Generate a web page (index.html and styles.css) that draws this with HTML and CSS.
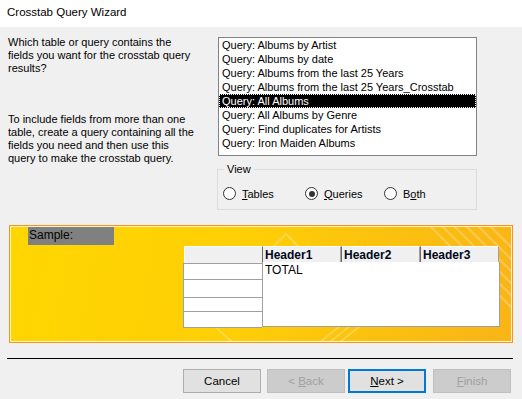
FILE: index.html
```html
<!DOCTYPE html>
<html lang="en">
<head>
    <meta charset="UTF-8">
    <title>Crosstab Query Wizard</title>
    <link rel="stylesheet" href="styles.css">
</head>
<body>
    <div class="titlebar">Crosstab Query Wizard</div>

    <div class="top">
        <div class="intro">
            <p class="para">Which table or query contains the<br>fields you want for the crosstab query<br>results?</p>
            <p class="para second">To include fields from more than one<br>table, create a query containing all the<br>fields you need and then use this<br>query to make the crosstab query.</p>
        </div>

        <div class="picker">
            <div class="listbox">
                <div class="item">Query: Albums by Artist</div>
                <div class="item">Query: Albums by date</div>
                <div class="item">Query: Albums from the last 25 Years</div>
                <div class="item">Query: Albums from the last 25 Years_Crosstab</div>
                <div class="item selected">Query: All Albums</div>
                <div class="item">Query: All Albums by Genre</div>
                <div class="item">Query: Find duplicates for Artists</div>
                <div class="item">Query: Iron Maiden Albums</div>
            </div>

            <div class="view">
                <span class="legend">View</span>
                <div class="options">
                    <label class="radio r-tables"><span class="dot"></span><span><u>T</u>ables</span></label>
                    <label class="radio r-queries"><span class="dot checked"></span><span><u>Q</u>ueries</span></label>
                    <label class="radio r-both"><span class="dot"></span><span>B<u>o</u>th</span></label>
                </div>
            </div>
        </div>
    </div>

    <div class="sample">
        <svg class="deco" width="502" height="116" viewBox="0 0 502 116">
            <g stroke="#ffffff" stroke-opacity="0.25" stroke-width="2" fill="none">
                <polyline points="258,26 276,8 294,26"/>
                <line x1="420" y1="0" x2="502" y2="82"/>
                <line x1="432" y1="0" x2="502" y2="70"/>
                <line x1="444" y1="0" x2="502" y2="58"/>
                <line x1="456" y1="0" x2="502" y2="46"/>
                <line x1="468" y1="0" x2="502" y2="34"/>
                <line x1="480" y1="0" x2="502" y2="22"/>
                <line x1="200" y1="96" x2="222" y2="116"/>
                <line x1="310" y1="116" x2="330" y2="100"/>
                <line x1="320" y1="116" x2="340" y2="100"/>
                <line x1="330" y1="116" x2="350" y2="100"/>
            </g>
        </svg>
        <div class="sample-label">Sample:</div>
        <div class="grid">
            <div class="row-heads">
                <div class="corner"></div>
                <div class="rh"></div>
                <div class="rh tall"></div>
                <div class="rh short"></div>
                <div class="rh"></div>
            </div>
            <div class="data">
                <div class="heads">
                    <div class="head">Header1</div>
                    <div class="head">Header2</div>
                    <div class="head">Header3</div>
                </div>
                <div class="body">TOTAL</div>
            </div>
        </div>
    </div>

    <div class="separator"></div>

    <div class="buttons">
        <button class="btn">Cancel</button>
        <button class="btn disabled">&lt; <u>B</u>ack</button>
        <button class="btn default"><u>N</u>ext &gt;</button>
        <button class="btn disabled"><u>F</u>inish</button>
    </div>
</body>
</html>
```

FILE: styles.css
```css
body {
    margin: 0;
    width: 522px;
    height: 399px;
    overflow: hidden;
    background: #f0f0f0;
    font-family: "Liberation Sans", Arial, sans-serif;
    font-size: 11px;
    color: #000;
}

.titlebar {
    height: 27px;
    line-height: 25px;
    padding-left: 7px;
    font-size: 11.5px;
    background: #fff;
}

.top {
    display: flex;
    height: 198px;
}

.intro {
    width: 210px;
    padding: 9px 0 0 8px;
    white-space: nowrap;
}

.para {
    margin: 0;
    line-height: 13px;
}

.para.second {
    margin-top: 38px;
}

.picker {
    width: 259px;
    padding-top: 10px;
}

.listbox {
    height: 112px;
    padding: 0 0 5px 0;
    background: #fff;
    border: 1px solid #828282;
}

.item {
    height: 14px;
    line-height: 14px;
    padding-left: 3px;
    white-space: nowrap;
}

.item.selected {
    background: #000;
    color: #fff;
    outline: 1px dotted #fff;
    outline-offset: -1px;
}

.view {
    position: relative;
    margin: 13px 0 0 -1px;
    height: 39px;
    border: 1px solid #dcdcdc;
}

.legend {
    position: absolute;
    left: 6px;
    top: -8px;
    padding: 0 3px;
    line-height: 14px;
    background: #f0f0f0;
}

.options {
    display: flex;
    padding: 17px 0 0 5px;
}

.radio {
    display: flex;
    align-items: center;
    gap: 6px;
    height: 13px;
}

.r-tables { width: 82px; }
.r-queries { width: 79px; }

.dot {
    width: 11px;
    height: 11px;
    border: 1px solid #333;
    border-radius: 50%;
    background: #fff;
    display: flex;
    align-items: center;
    justify-content: center;
}

.dot.checked::after {
    content: "";
    width: 6px;
    height: 6px;
    border-radius: 50%;
    background: #333;
}

.sample {
    position: relative;
    margin-left: 9px;
    width: 502px;
    height: 116px;
    border: 1px solid #f7941d;
    box-shadow: inset 0 0 0 1px #fff3c0;
    background: linear-gradient(100deg, #ffd600 0%, #fecf06 45%, #fcc00f 75%, #f9b417 100%);
}

.deco {
    position: absolute;
    left: 0;
    top: 0;
}

.sample-label {
    position: relative;
    width: 85px;
    height: 18px;
    line-height: 17px;
    margin: 1px 0 0 18px;
    padding-left: 1px;
    font-size: 12px;
    background: #808080;
}

.grid {
    position: relative;
    display: flex;
    margin: 1px 0 0 173px;
}

.row-heads {
    width: 79px;
}

.corner {
    height: 15px;
    margin-left: 1px;
    background: #f0f0f0;
    border-top: 1px solid #fff;
    border-left: 1px solid #fff;
    border-bottom: 1px solid #f0f0f0;
}

.rh {
    height: 15px;
    background: #fff;
    border: 1px solid #a0a0a0;
    border-top: none;
    border-right: none;
}

.rh:nth-child(2) {
    border-top: 1px solid #a0a0a0;
}

.rh.tall { height: 17px; }
.rh.short { height: 13px; }

.data {
    width: 238px;
}

.heads {
    display: flex;
}

.head {
    width: 75px;
    height: 15px;
    line-height: 16px;
    padding-left: 2px;
    background: #f0f0f0;
    border-top: 1px solid #fff;
    border-left: 1px solid #696969;
    border-right: 1px solid #a0a0a0;
    font-size: 12px;
    font-weight: bold;
    color: #000820;
}

.body {
    height: 63px;
    padding: 1px 0 0 2px;
    background: #fff;
    border: 1px solid #a0a0a0;
    border-top: none;
    line-height: 14px;
    font-size: 12px;
}

.separator {
    margin: 15px 9px 0 7px;
    height: 1px;
    background: #000;
}

.buttons {
    display: flex;
    margin: 10px 0 0 183px;
}

.btn {
    width: 78px;
    height: 24px;
    margin: 0;
    padding: 0;
    font-family: "Liberation Sans", Arial, sans-serif;
    font-size: 11.5px;
    color: #000;
    background: #e1e1e1;
    border: 1px solid #adadad;
}

.btn + .btn { margin-left: 6px; }
.btn.default { margin-left: 3px; border: 2px solid #0078d7; }
.btn.default + .btn { margin-left: 7px; }

.btn.disabled {
    background: #cccccc;
    border-color: #bfbfbf;
    color: #a0a0a0;
}
```
